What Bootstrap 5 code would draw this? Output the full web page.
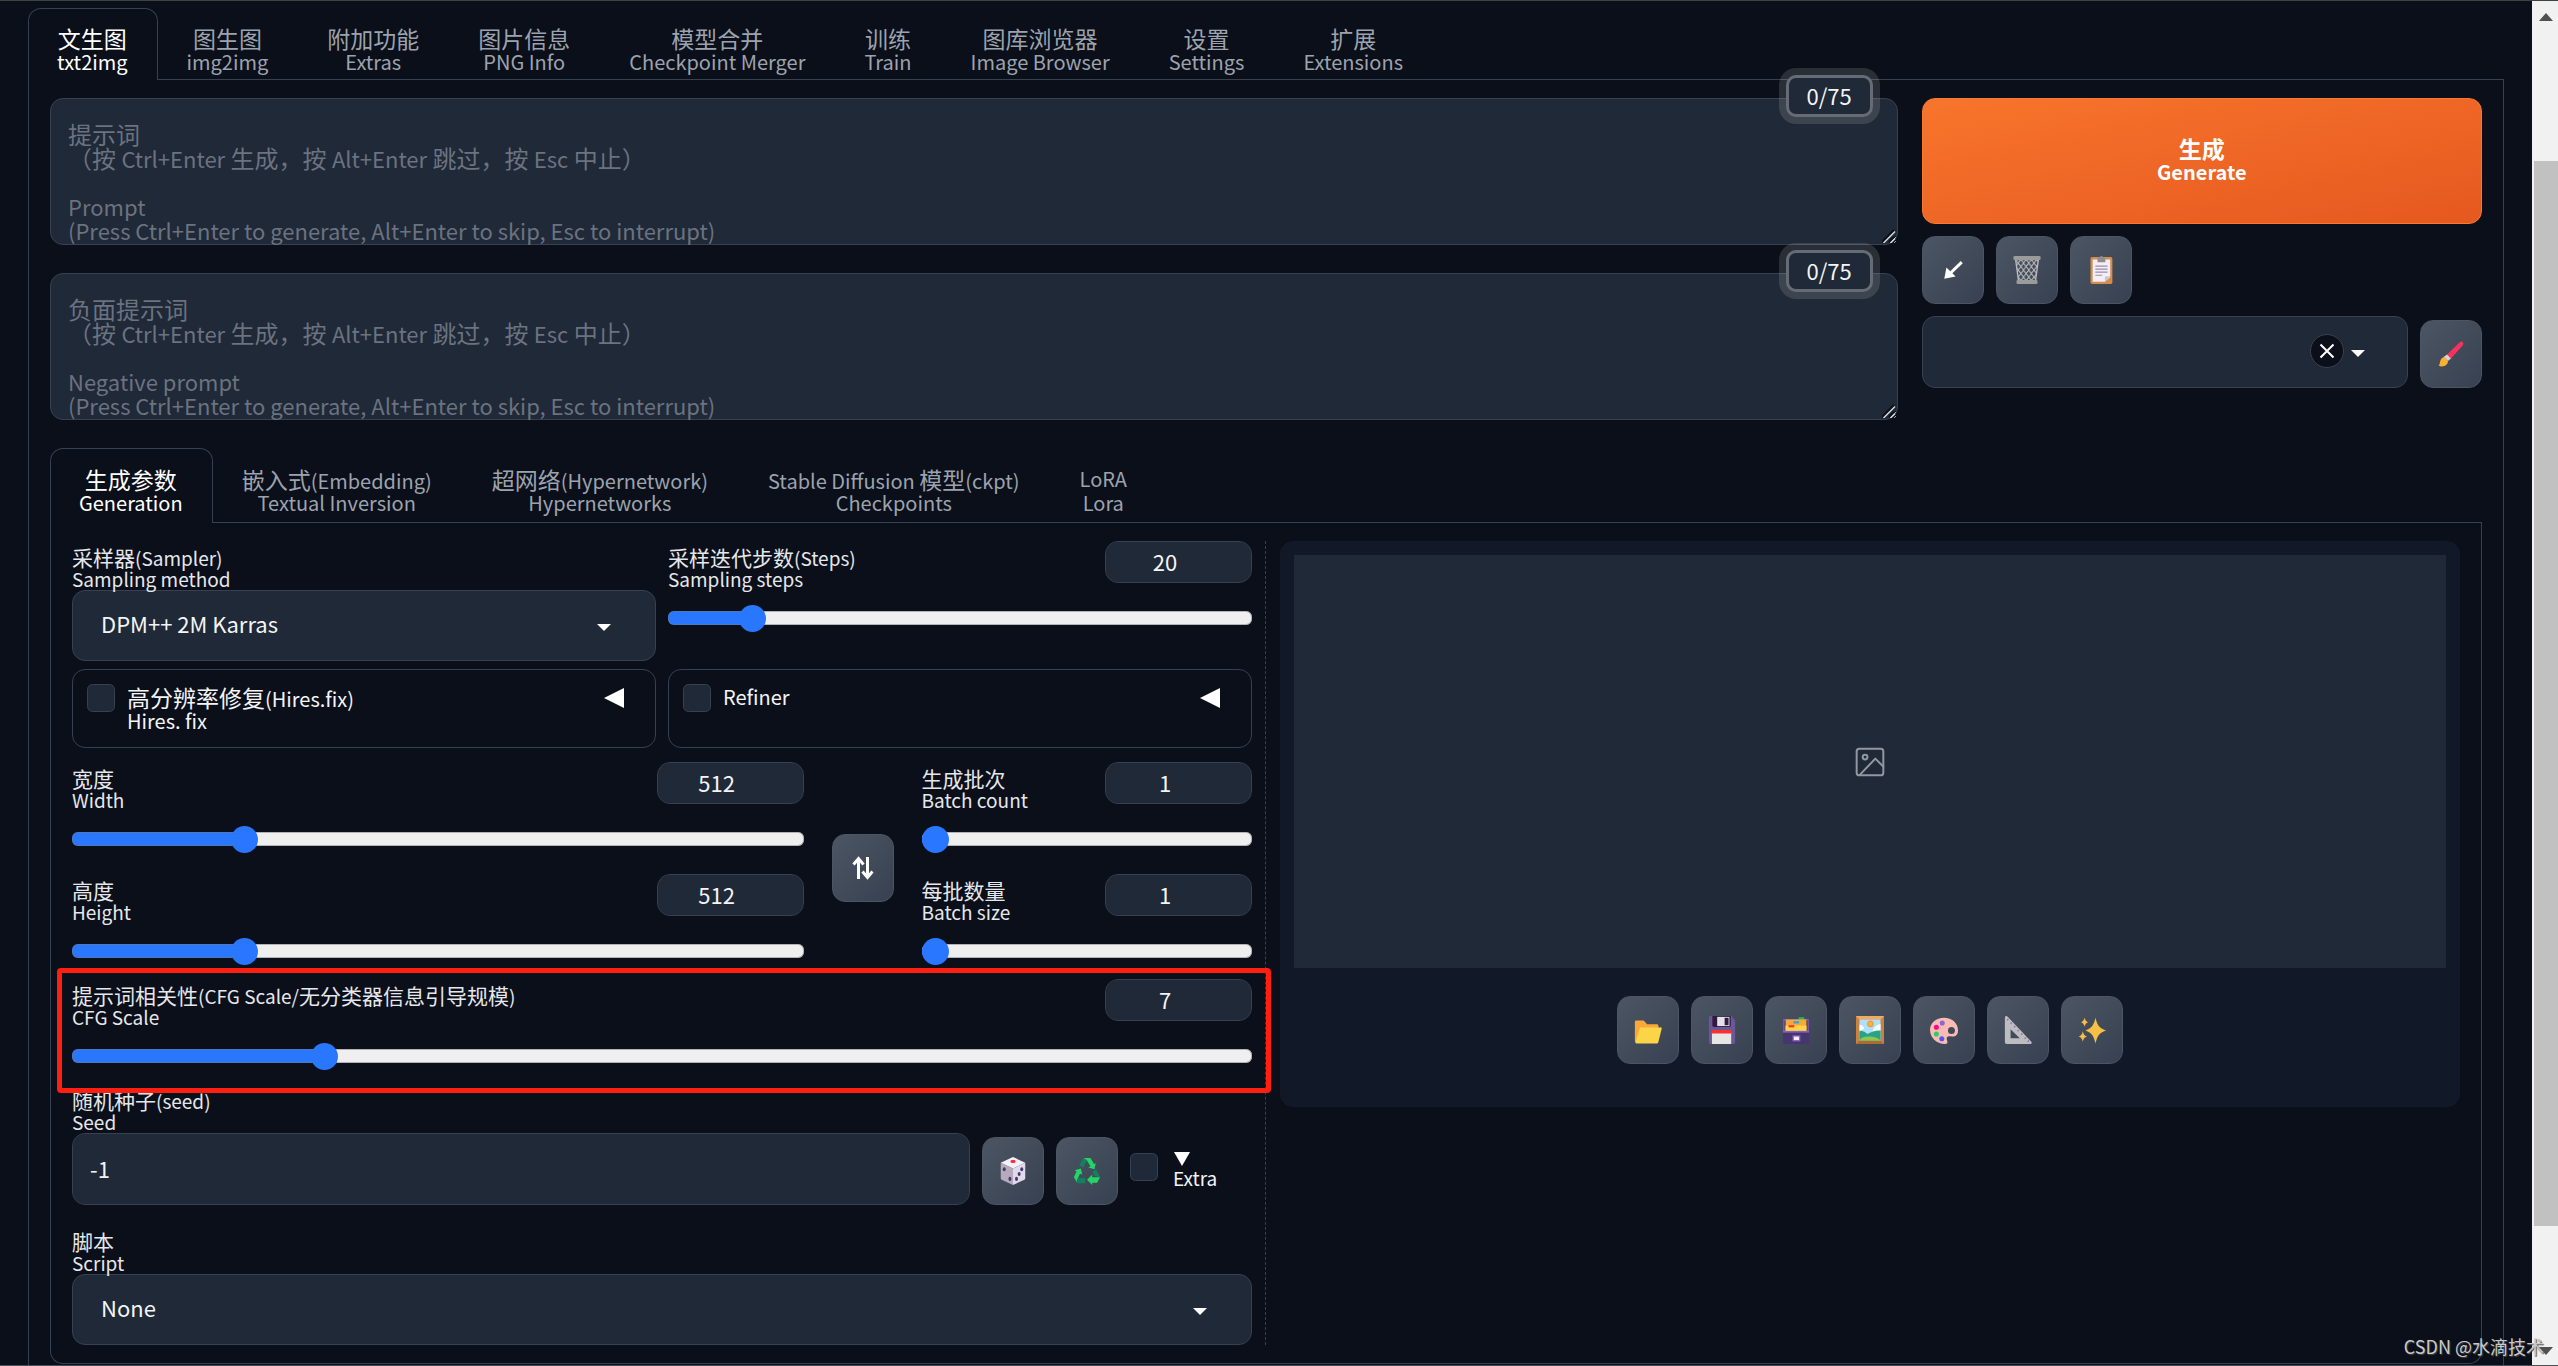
<!DOCTYPE html>
<html lang="zh-CN" data-bs-theme="dark">
<head>
<meta charset="utf-8">
<meta name="viewport" content="width=device-width, initial-scale=1">
<title>Stable Diffusion</title>
<link href="https://cdn.jsdelivr.net/npm/bootstrap@5.3.0/dist/css/bootstrap.min.css" rel="stylesheet">
<style>
:root{--ink:#0b0f19;--field:#1f2937;--line:#374151;--blue:#2a77ff;--r:13px}
body{font-family:"Noto Sans CJK SC","Noto Sans",sans-serif;font-size:22px;line-height:24px;color:#f3f4f6;background:var(--ink)}
.shell{height:100vh;overflow:hidden;border-top:1px solid #3d433f;border-bottom:1px solid #4b4d57}
.workspace{padding:7px 28px 0;min-width:0}
.pane{border:1px solid var(--line);border-top:0}
.pane-main{padding:18px 21px 60px;border-bottom:0}
.pane-sub{padding:18px 21px 18px;border-radius:0 0 var(--r) var(--r)}

/* tabs: Chinese line above, Latin line below */
.zh{font-size:23px}
.en{font-size:20px}
.en-in{font-size:20px;line-height:20px}
.nav-tabs{--bs-nav-tabs-border-color:var(--line)}
.nav-tabs .nav-link{font-size:23px;line-height:24px;padding:17px 29px 6px 28px;text-align:center;color:#9ca3af;border:1px solid transparent;border-bottom:0;border-radius:var(--r) var(--r) 0 0;margin-bottom:-1px}
.nav-tabs .nav-link.active{color:#fff;background:var(--ink);border-color:var(--line)}
.tabs-sub .nav-link{padding:18px 29px 8px 28px}
.tabs-sub .nav-link:not(.active){padding-right:30px}

/* prompt boxes */
.prompt-box{position:relative}
.prompt-box textarea{display:block;height:147px;overflow:hidden;resize:vertical;padding:22px 18px 0;background:var(--field);border:1px solid var(--line);border-radius:var(--r);font-size:22px;line-height:24px}
.prompt-box label{position:absolute;left:18px;top:24px;color:#6b7280;font-size:24px;line-height:24px;pointer-events:none;white-space:pre-line}
.prompt-box label .en-p{font-size:22px;line-height:22px}
.grip{position:absolute;right:2px;bottom:2px;width:14px;height:14px;pointer-events:none}
.counter{position:absolute;right:25px;top:-23px;width:87px;height:42px;line-height:34px;text-align:center;background:var(--field);border:3px solid #666c76;border-radius:10px;box-shadow:0 0 0 7px rgba(255,255,255,.13)}
.actions{flex:0 0 calc(23% + 1px)}

.btn-generate{height:126px;padding:0 0 3px;font-size:23px;font-weight:600;line-height:24px;color:#fff;border:1px solid #f97a2e;border-radius:var(--r);background:linear-gradient(to bottom right,#f8752c,#e5581f)}
.btn-generate:hover{color:#fff}
.btn-tool{flex:0 0 62px;width:62px;height:68px;padding:0;display:flex;align-items:center;justify-content:center;border:1px solid #4b5563;border-radius:var(--r);background:linear-gradient(to bottom right,#4b5563,#374151)}
.btn-tool svg{width:28px;height:28px}

/* fields */
.field-label{display:block;font-size:21px;line-height:21px;padding:6px 0 1px;color:#e5e7eb}
.field-label .en-l{font-size:19px;line-height:19px}
.field-label .en-b{display:block;font-size:19px;line-height:21px}
.form-select,.form-control{color:#f3f4f6;background-color:var(--field);border:1px solid var(--line);border-radius:var(--r)}
.form-select{height:71px;padding:0 60px 5px 28px;font-size:22px;line-height:24px;background-image:url("data:image/svg+xml,%3csvg xmlns='http://www.w3.org/2000/svg' viewBox='0 0 14 7'%3e%3cpath fill='%23fff' d='M0 0h14L7 7z'/%3e%3c/svg%3e");background-size:14px 7px;background-position:right 44px top 33px}
.style-select{height:72px;background-position:right 42px top 33px}
.btn-clear{position:absolute;right:64px;top:18px;width:34px;height:34px;padding:0;border:1px solid var(--line);border-radius:50%;background:var(--ink);display:flex;align-items:center;justify-content:center}
.num{flex:0 0 147px;width:147px;height:42px;padding:0 27px 3px 0;font-size:22px;line-height:24px;text-align:center;appearance:textfield;-moz-appearance:textfield}
.num::-webkit-inner-spin-button,.seed::-webkit-inner-spin-button{-webkit-appearance:none;margin:0}
.seed{height:72px;padding:0 17px 3px;font-size:22px;appearance:textfield}
.head{height:42px}
.slider{display:block;width:100%;height:14px;margin:28px 0 0;appearance:none;-webkit-appearance:none;border-radius:6px;background:linear-gradient(to right,var(--blue) var(--v),#efefef var(--v));box-shadow:inset 0 0 0 1px rgba(120,120,120,.5)}
.slider::-webkit-slider-thumb{-webkit-appearance:none;width:27px;height:27px;border-radius:50%;background:var(--blue);border:0}
.fold{height:79px;padding:15px 14px;border:1px solid var(--line);border-radius:var(--r);gap:12px}
.tick{flex:none;width:28px;height:28px;margin:0;border:1px solid var(--line);border-radius:7px;background:var(--field)}
.fold .tick{margin-top:-1px}
.fold svg{width:20px;height:20px;margin:3px 17px 0 0}
.w-size{flex:0 0 62%}
.g12{gap:12px}.g28{gap:28px}.g24{gap:24px}
.size-row{margin-top:14px}
.cfg-row{margin-top:21px}
.seed-row{margin-top:21px}
.script-row{margin-top:20px}
.extra-row{gap:15px;width:122px;height:52px}
.extra{font-size:19px;line-height:22px}
.extra svg{margin:-1px 0 1px 1px}
.marked{position:relative}
.marked::after{content:"";position:absolute;inset:-11px -19px -30px -15px;border:5px solid #ff1f10;border-radius:4px;pointer-events:none}
.col-set{flex:1 1 0;min-width:0}
.divide{align-self:stretch;border-left:1px dashed #39414f;margin:0 14px 0 13px}
.gallery{padding:14px;border-radius:var(--r);background:#111827;height:566px}
.gallery-tools{margin-top:28px}
.stage{height:413px;background:var(--field)}
.stage svg{width:32px;height:32px}

/* page scrollbar and watermark */
.rail{flex:0 0 26px;background:#f1f1f1;padding:12px 0 10px 2px}
.rail svg{display:block;flex:none;width:20px;height:8px;margin:0 0 0 2px}
.rail .thumb{flex:1;background:#c1c1c1;margin:140px 0 121px}
.credit{position:absolute;right:14px;bottom:7px;font-size:18px;line-height:26px;color:#c9c9c9;text-shadow:1px 1px 1px #444}
</style>
</head>
<body>
<svg width="0" height="0" class="position-absolute" aria-hidden="true">
 <defs>
  <pattern id="mesh" width="6" height="8" patternUnits="userSpaceOnUse"><path d="M0 0l6 8M6 0L0 8" stroke="#b9b9b9" stroke-width="1.2"/></pattern>
 </defs>
</svg>
<div class="shell d-flex">
 <main class="workspace flex-grow-1">
  <ul class="nav nav-tabs">
   <li class="nav-item"><button class="nav-link active"><span class="zh d-block">文生图</span><span class="en d-block">txt2img</span></button></li>
   <li class="nav-item"><button class="nav-link"><span class="zh d-block">图生图</span><span class="en d-block">img2img</span></button></li>
   <li class="nav-item"><button class="nav-link"><span class="zh d-block">附加功能</span><span class="en d-block">Extras</span></button></li>
   <li class="nav-item"><button class="nav-link"><span class="zh d-block">图片信息</span><span class="en d-block">PNG Info</span></button></li>
   <li class="nav-item"><button class="nav-link"><span class="zh d-block">模型合并</span><span class="en d-block">Checkpoint Merger</span></button></li>
   <li class="nav-item"><button class="nav-link"><span class="zh d-block">训练</span><span class="en d-block">Train</span></button></li>
   <li class="nav-item"><button class="nav-link"><span class="zh d-block">图库浏览器</span><span class="en d-block">Image Browser</span></button></li>
   <li class="nav-item"><button class="nav-link"><span class="zh d-block">设置</span><span class="en d-block">Settings</span></button></li>
   <li class="nav-item"><button class="nav-link"><span class="zh d-block">扩展</span><span class="en d-block">Extensions</span></button></li>
  </ul>
  <div class="pane pane-main">
   <div class="d-flex g24 mb-4 pb-1">
    <div class="d-flex flex-column g28 flex-grow-1">
     <div class="prompt-box">
      <textarea class="form-control" id="prompt"></textarea>
      <label for="prompt">提示词
（按 <span class="en-p">Ctrl+Enter</span> 生成，按 <span class="en-p">Alt+Enter</span> 跳过，按 <span class="en-p">Esc</span> 中止）

<span class="en-p">Prompt</span>
<span class="en-p">(Press Ctrl+Enter to generate, Alt+Enter to skip, Esc to interrupt)</span></label>
      <svg class="grip" viewBox="0 0 14 14" aria-hidden="true"><path d="M0 13L12 1M7 13l5-5" stroke="#0b0f19" stroke-width="2"/><path d="M1.500 14L13 2.500M8.500 14L13 9.500" stroke="#d5d7da" stroke-width="1.500"/></svg>
      <span class="counter">0/75</span>
     </div>
     <div class="prompt-box">
      <textarea class="form-control" id="negative"></textarea>
      <label for="negative">负面提示词
（按 <span class="en-p">Ctrl+Enter</span> 生成，按 <span class="en-p">Alt+Enter</span> 跳过，按 <span class="en-p">Esc</span> 中止）

<span class="en-p">Negative prompt</span>
<span class="en-p">(Press Ctrl+Enter to generate, Alt+Enter to skip, Esc to interrupt)</span></label>
      <svg class="grip" viewBox="0 0 14 14" aria-hidden="true"><path d="M0 13L12 1M7 13l5-5" stroke="#0b0f19" stroke-width="2"/><path d="M1.500 14L13 2.500M8.500 14L13 9.500" stroke="#d5d7da" stroke-width="1.500"/></svg>
      <span class="counter">0/75</span>
     </div>
    </div>
    <div class="actions d-flex flex-column g12">
     <button class="btn btn-generate w-100"><span class="d-block">生成</span><span class="d-block en">Generate</span></button>
     <div class="d-flex g12">
      <button class="btn btn-tool" aria-label="Read parameters"><svg viewBox="0 0 32 32"><path d="M26 7L10.500 22" stroke="#fff" stroke-width="3.400" fill="none"/><path d="M6 26l2.500-13 10.500 10.500z" fill="#fff"/></svg></button>
      <button class="btn btn-tool" aria-label="Clear prompt"><svg viewBox="0 0 32 32"><path d="M3 4h26l-3.500 26h-19z" fill="url(#mesh)" stroke="#b9b9b9" stroke-width="1.600"/><rect x="0.500" y="0" width="31" height="4.500" rx="1.500" fill="#9b9b9b"/><rect x="4" y="27.500" width="24" height="4.500" rx="1.500" fill="#9b9b9b"/></svg></button>
      <button class="btn btn-tool" aria-label="Apply styles"><svg viewBox="0 0 32 32"><rect x="4" y="1" width="25" height="31" rx="2" fill="#d68d49"/><path d="M6.500 4H26.500V24L20.500 29.500H6.500z" fill="#f3eef8"/><path d="M26.500 23h-4.500a1.500 1.500 0 0 0-1.500 1.500v5z" fill="#cdc4d6"/><path d="M12 2h2.500a2 2 0 0 1 4 0H21v5H12z" fill="#8d8d90"/><path d="M9.500 11.500h14M9.500 15h14M9.500 18.500h14M9.500 22h8" stroke="#998ea4" stroke-width="1.300"/></svg></button>
     </div>
     <div class="d-flex g12 align-items-end">
      <div class="position-relative flex-grow-1">
       <select class="form-select style-select" aria-label="Styles"><option></option></select>
       <button class="btn-clear" aria-label="Clear"><svg width="16" height="16" viewBox="0 0 16 16"><path d="M1.500 1.500l13 13M14.500 1.500l-13 13" stroke="#fff" stroke-width="2"/></svg></button>
      </div>
      <button class="btn btn-tool" aria-label="Edit styles"><svg viewBox="0 0 32 32"><path d="M26 2.500c2-2 5.500.5 3.500 3.500L16 21l-4.500-4.500z" fill="#f8315e"/><path d="M11.500 16.500L16 21l-3.500 3-5-4.500z" fill="#d3d3d3"/><path d="M8 19.500l4.500 4.500c.5 4-5 8-10.500 5.500 2-2 .5-8 6-10z" fill="#ffb02e"/></svg></button>
     </div>
    </div>
   </div>

   <ul class="nav nav-tabs tabs-sub">
    <li class="nav-item"><button class="nav-link active"><span class="zh d-block">生成参数</span><span class="en d-block">Generation</span></button></li>
    <li class="nav-item"><button class="nav-link">嵌入式<span class="en-in">(Embedding)</span><span class="en d-block">Textual Inversion</span></button></li>
    <li class="nav-item"><button class="nav-link">超网络<span class="en-in">(Hypernetwork)</span><span class="en d-block">Hypernetworks</span></button></li>
    <li class="nav-item"><button class="nav-link"><span class="en-in">Stable Diffusion </span>模型<span class="en-in">(ckpt)</span><span class="en d-block">Checkpoints</span></button></li>
    <li class="nav-item"><button class="nav-link"><span class="en d-block">LoRA</span><span class="en d-block">Lora</span></button></li>
   </ul>
   <div class="pane pane-sub d-flex">
    <section class="col-set">
     <div class="d-flex g12">
      <div class="col-set">
       <label class="field-label" for="sampler">采样器<span class="en-l">(Sampler)</span><span class="en-b">Sampling method</span></label>
       <select class="form-select" id="sampler"><option>DPM++ 2M Karras</option></select>
      </div>
      <div class="col-set">
       <div class="head d-flex justify-content-between">
        <label class="field-label" for="steps">采样迭代步数<span class="en-l">(Steps)</span><span class="en-b">Sampling steps</span></label>
        <input class="form-control num" type="number" value="20" aria-label="Sampling steps">
       </div>
       <input class="slider" id="steps" type="range" min="1" max="150" value="20" style="--v:14%">
      </div>
     </div>
     <div class="d-flex g12 mt-2">
      <div class="fold col-set d-flex">
       <input class="form-check-input tick" type="checkbox" id="hires"><label class="flex-grow-1 zh" for="hires">高分辨率修复<span class="en-in">(Hires.fix)</span><span class="en d-block">Hires. fix</span></label>
       <svg viewBox="0 0 20 20"><path d="M0 10L20 0v20z" fill="#fff"/></svg>
      </div>
      <div class="fold col-set d-flex">
       <input class="form-check-input tick" type="checkbox" id="refiner"><label class="flex-grow-1 en" for="refiner">Refiner</label>
       <svg viewBox="0 0 20 20"><path d="M0 10L20 0v20z" fill="#fff"/></svg>
      </div>
     </div>
     <div class="d-flex g28 align-items-center size-row">
      <div class="w-size d-flex flex-column g28">
       <div>
        <div class="head d-flex justify-content-between">
         <label class="field-label" for="width">宽度<span class="en-b">Width</span></label>
         <input class="form-control num" type="number" value="512" aria-label="Width">
        </div>
        <input class="slider" id="width" type="range" min="64" max="2048" value="512" style="--v:23%">
       </div>
       <div>
        <div class="head d-flex justify-content-between">
         <label class="field-label" for="height">高度<span class="en-b">Height</span></label>
         <input class="form-control num" type="number" value="512" aria-label="Height">
        </div>
        <input class="slider" id="height" type="range" min="64" max="2048" value="512" style="--v:23%">
       </div>
      </div>
      <button class="btn btn-tool mt-3" aria-label="Swap width and height"><svg viewBox="0 0 28 28"><path d="M9.500 25V5M18.500 3v20M4.500 10.500l5-6 5 6M13.500 17.500l5 6 5-6" fill="none" stroke="#fff" stroke-width="3"/></svg></button>
      <div class="col-set d-flex flex-column g28">
       <div>
        <div class="head d-flex justify-content-between">
         <label class="field-label" for="count">生成批次<span class="en-b">Batch count</span></label>
         <input class="form-control num" type="number" value="1" aria-label="Batch count">
        </div>
        <input class="slider" id="count" type="range" min="1" max="100" value="1" style="--v:0%">
       </div>
       <div>
        <div class="head d-flex justify-content-between">
         <label class="field-label" for="size">每批数量<span class="en-b">Batch size</span></label>
         <input class="form-control num" type="number" value="1" aria-label="Batch size">
        </div>
        <input class="slider" id="size" type="range" min="1" max="8" value="1" style="--v:0%">
       </div>
      </div>
     </div>
     <div class="marked cfg-row">
      <div class="head d-flex justify-content-between">
       <label class="field-label" for="cfg">提示词相关性<span class="en-l">(CFG Scale/</span>无分类器信息引导规模<span class="en-l">)</span><span class="en-b">CFG Scale</span></label>
       <input class="form-control num" type="number" value="7" aria-label="CFG Scale">
      </div>
      <input class="slider" id="cfg" type="range" min="1" max="30" step="0.5" value="7" style="--v:21%">
     </div>
     <div class="d-flex g12 align-items-end seed-row">
      <div class="flex-grow-1">
       <label class="field-label" for="seed">随机种子<span class="en-l">(seed)</span><span class="en-b">Seed</span></label>
       <input class="form-control seed" id="seed" type="number" value="-1">
      </div>
      <button class="btn btn-tool" aria-label="Random seed"><svg viewBox="0 0 32 32"><path d="M16 0L30 6.500 16 13 2 6.500z" fill="#f6f0fb"/><path d="M2 6.500L16 13v19L3 26a2 2 0 0 1-1-2z" fill="#b6aabd"/><path d="M30 6.500L16 13v19l13-6a2 2 0 0 0 1-2z" fill="#e3d9ec"/><ellipse cx="16" cy="5" rx="3" ry="1.800" fill="#f8312f"/><g fill="#453a6b"><ellipse cx="6" cy="14" rx="1.700" ry="2.300"/><ellipse cx="12.500" cy="25" rx="1.700" ry="2.300"/><ellipse cx="26" cy="14" rx="1.700" ry="2.300"/><ellipse cx="23" cy="19.500" rx="1.700" ry="2.300"/><ellipse cx="20" cy="25" rx="1.700" ry="2.300"/></g></svg></button>
      <button class="btn btn-tool" aria-label="Reuse seed"><svg viewBox="0 0 32 32"><path d="M12 1h8l4 7 2-1-1.500 7-7-2 2.500-1.500L16 4z" fill="#26d368"/><path d="M12 1l4 3-4.500 8L7 9.500z" fill="#14805e"/><path d="M2 15l7-2 1.500 7-2.500-1-3.500 7.500L5 30 1 23l3-6.500z" fill="#26d368"/><path d="M5 30l1-6h8v6z" fill="#14805e"/><path d="M16 26l6-6v3h9l-3.500 6.500H22V32z" fill="#26d368"/><path d="M31 23l-6-1-3-5 4.500-3z" fill="#14805e"/></svg></button>
      <div class="d-flex extra-row">
       <input class="form-check-input tick" type="checkbox" id="extra">
       <label class="extra" for="extra"><svg class="d-block" width="16" height="14" viewBox="0 0 16 14"><path d="M0 0h16L8 14z" fill="#fff"/></svg>Extra</label>
      </div>
     </div>
     <div class="script-row">
      <label class="field-label" for="script">脚本<span class="en-b">Script</span></label>
      <select class="form-select" id="script"><option>None</option></select>
     </div>
    </section>
    <div class="divide"></div>
    <section class="col-set">
     <div class="gallery">
      <div class="stage d-flex align-items-center justify-content-center"><svg viewBox="0 0 24 24" fill="none" stroke="#9297a0" stroke-width="1.500" stroke-linecap="round" stroke-linejoin="round"><rect x="2" y="2" width="20" height="20" rx="2"/><circle cx="8.300" cy="8.300" r="1.800"/><path d="M22 15.500l-6-6L4.500 21.500"/></svg></div>
      <div class="d-flex justify-content-center g12 gallery-tools">
       <button class="btn btn-tool" aria-label="Open folder"><svg viewBox="0 0 32 32"><path d="M1 6.500A1.500 1.500 0 0 1 2.500 5H11l4 4.500h11.500A2 2 0 0 1 28 11v6L3 30.500A2 2 0 0 1 1 29z" fill="#f9a93a"/><path d="M8.500 13H30a1.500 1.500 0 0 1 1.500 2l-3.700 15a2 2 0 0 1-2 1.500H3.500a1.500 1.500 0 0 1-1.500-2l4.500-15A2 2 0 0 1 8.500 13z" fill="#fbd448"/></svg></button>
       <button class="btn btn-tool" aria-label="Save"><svg viewBox="0 0 32 32"><path d="M3 0h24l4 5v25a2 2 0 0 1-2 2H3a2 2 0 0 1-2-2V2a2 2 0 0 1 2-2z" fill="#6a5796"/><path d="M5 0h21v10.500a2 2 0 0 1-2 2H7a2 2 0 0 1-2-2z" fill="#321b41"/><path d="M10.500 1h14v10.500h-14z" fill="#e4e2e8"/><path d="M19 2h4.500v8.500H19z" fill="#321b41"/><path d="M4.500 19h22v13h-22z" fill="#e6e6e6"/><path d="M4.500 16h22v4h-22z" fill="#f8312f"/></svg></button>
       <button class="btn btn-tool" aria-label="Save as zip"><svg viewBox="0 0 32 32"><path d="M1.500 3.500h29v15h-29z" fill="#8561c5"/><path d="M3 5h26v12H3z" fill="#321b41"/><path d="M19 1.500h6.500V5H19z" fill="#1fbf5c"/><path d="M4 4h24v14H4z" fill="#f9a93a"/><path d="M4 11h24v7H4z" fill="#fbd448"/><path d="M13 6h6.500v2.500H13z" fill="#2aa3e6"/><path d="M7.500 10.500H14V13H7.500z" fill="#f8312f"/><path d="M1 17.500h30V30a2 2 0 0 1-2 2H3a2 2 0 0 1-2-2z" fill="#46366e"/><path d="M1 17h30v2H1z" fill="#8561c5"/><path d="M12 22h9v7h-9z" fill="#8561c5"/><path d="M13.500 23.500h6v4h-6z" fill="#f3eef8"/></svg></button>
       <button class="btn btn-tool" aria-label="Send to img2img"><svg viewBox="0 0 32 32"><path d="M0 0h32v32H0z" fill="#c9823f"/><path d="M0 0h32l-4 4H4z" fill="#efab63"/><path d="M0 32h32l-4-4H4z" fill="#b06a30"/><path d="M4 4h24v24H4z" fill="#aee0fb"/><path d="M4 10c3 0 5 2 5.500 4.500L4 17zM28 9c-5 1-8 4-9 8h9z" fill="#fff"/><circle cx="16.500" cy="9" r="3.300" fill="#f9b23c" stroke="#f08a2c"/><path d="M4 17.500c3-1 6 0 9 3 4-2 9-4.500 15-4v11.500H4z" fill="#2aa285"/><path d="M4 28c2-6 19-6 24 0z" fill="#8cc750"/></svg></button>
       <button class="btn btn-tool" aria-label="Send to inpaint"><svg viewBox="0 0 32 32"><path fill-rule="evenodd" d="M16 2C7 2 0 8 0 16s7 16 17.500 16c4 0 2-3.500 1.500-6 0-3 3-3 6-2.500 4 .5 7-2 7-7C32 8 25 2 16 2zm8.500 10.500a4 4 0 1 1 0 8 4 4 0 0 1 0-8z" fill="#f9bcb4"/><circle cx="14" cy="8" r="2.900" fill="#8f68cf"/><circle cx="7.300" cy="12.800" r="2.900" fill="#f70a8d"/><circle cx="7.300" cy="20.500" r="2.900" fill="#25d069"/><circle cx="13.500" cy="26" r="2.900" fill="#4f57f5"/></svg></button>
       <button class="btn btn-tool" aria-label="Send to extras"><svg viewBox="0 0 32 32"><path fill-rule="evenodd" d="M1 2C1 0 3-.5 4.500 1L31 29c1.500 1.500.5 3-1.500 3H3a2 2 0 0 1-2-2zM7.500 15v10.500h10.500z" fill="#bdbdbf"/><path d="M5 3.500l-1.500 1.500M9 7.500L7.500 9M13 11.500L11.500 13M17 16l-1.500 1.500M21 20l-1.500 1.500M25 24.500L23.500 26M28.500 28L27 29.500" stroke="#8d73b8" stroke-width="1.500"/></svg></button>
       <button class="btn btn-tool" aria-label="Upscale"><svg viewBox="0 0 32 32" fill="#f8bf47"><path d="M20 2c2 8 4 12 12 14.500C24 19 22 23 20 31.500 18 23 16 19 8.500 16.500 16 14 18 10 20 2z"/><path d="M7.500 2c1 3 1.500 4 4 5-2.500 1-3 2-4 5-1-3-1.500-4-4-5 2.500-1 3-2 4-5zM5.500 17.500c1 4 2 5 5 6-3 1-4 2-5 6-1-4-2-5-5-6 3-1 4-2 5-6z"/></svg></button>
      </div>
     </div>
    </section>
   </div>
  </div>
 </main>
 <div class="rail d-flex flex-column" aria-hidden="true">
  <svg viewBox="0 0 20 8"><path d="M3 8h14L10 0z" fill="#505050"/></svg>
  <div class="thumb"></div>
  <svg viewBox="0 0 20 8"><path d="M3 0h14l-7 8z" fill="#505050"/></svg>
 </div>
</div>
<div class="credit">CSDN @水滴技术</div>
</body>
</html>
